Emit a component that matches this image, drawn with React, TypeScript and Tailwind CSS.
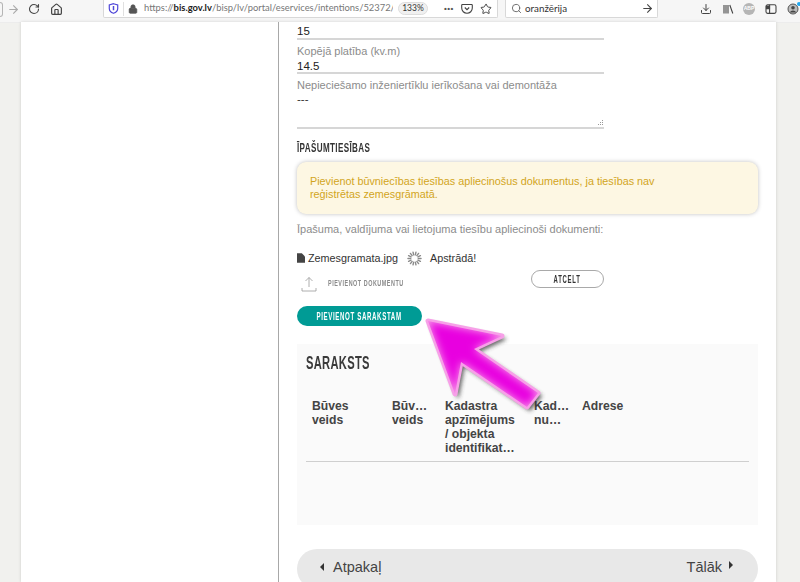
import { ArrowRight, Download, House, Lock, RotateCw, Search, Star } from "lucide-react";

const condensed = "inline-block whitespace-nowrap font-bold uppercase";

const columns = [
  { lines: ["Būves", "veids"], w: "w-[80px]" },
  { lines: ["Būv…", "veids"], w: "w-[53px]" },
  { lines: ["Kadastra", "apzīmējums", "/ objekta", "identifikat…"], w: "w-[89px]" },
  { lines: ["Kad…", "nu…"], w: "w-[48px]" },
  { lines: ["Adrese"], w: "w-[60px]" },
];

const spokes = Array.from({ length: 14 }, (_, i) => (i * Math.PI * 2) / 14);

function Toolbar() {
  return (
    <header className="h-[23px] shrink-0 border-b border-[#ececec] bg-[#f6f6f6] text-[#444]">
      <div className="flex h-[18px] items-center">
        <div className="h-[15px] w-[3px] rounded-r-full border border-l-0 border-[#b5b5b5]" />
        <ArrowRight size={13} className="ml-[4px] text-[#aaa]" />
        <RotateCw size={12} className="ml-[8px]" strokeWidth={2.2} />
        <House size={13} className="ml-[10px]" strokeWidth={2.2} />
        <div className="ml-[40px] flex h-[18px] w-[395px] items-center overflow-hidden rounded-b-[2px] border border-t-0 border-[#d8d8d8] bg-white">
          <svg viewBox="0 0 12 12" className="ml-[4px] h-[11px] w-[11px] shrink-0">
            <path d="M6 .8 10.6 2.2V6C10.6 8.6 8.4 10.4 6 11.2 3.6 10.4 1.4 8.6 1.4 6V2.2Z" fill="none" stroke="#4f46d8" strokeWidth="1.3" />
            <path d="M6 3.2V8" stroke="#4f46d8" strokeWidth="1.6" />
          </svg>
          <div className="ml-[4px] h-[14px] w-px shrink-0 bg-[#e0e0e0]" />
          <Lock size={10} className="ml-[4px] shrink-0 fill-[#555] text-[#555]" />
          <p className="ml-[6px] w-[249px] shrink-0 overflow-hidden whitespace-nowrap font-['Lato',sans-serif] text-[9.4px] text-[#777]">
            https://<b className="font-bold text-[#222]">bis.gov.lv</b>/bisp/lv/portal/eservices/intentions/52372/
          </p>
          <span className="ml-[5px] flex h-[13px] w-[30px] shrink-0 items-center justify-center rounded-full border border-[#ddd] bg-[#f0f0f0] font-['Lato',sans-serif] text-[8.5px] text-[#333]">
            133%
          </span>
          <span className="ml-[16px] shrink-0 text-[8px] font-bold leading-none tracking-[0.5px] text-[#555]">•••</span>
          <svg viewBox="0 0 12 12" className="ml-[7px] h-[12px] w-[12px] shrink-0" fill="none" stroke="#444" strokeWidth="1.1">
            <path d="M1.5 1.5h9a.8.8 0 0 1 .8.8V5a5.3 5.3 0 0 1-10.6 0V2.3a.8.8 0 0 1 .8-.8Z" />
            <path d="M3.8 4.5 6 6.7l2.2-2.2" />
          </svg>
          <Star size={12} className="ml-[7px] shrink-0" />
        </div>
        <div className="ml-[7px] flex h-[18px] w-[153px] items-center rounded-b-[2px] border border-t-0 border-[#d8d8d8] bg-white">
          <Search size={11} className="ml-[5px] text-[#666]" />
          <span className="ml-[3px] flex-1 font-['Lato',sans-serif] text-[9.8px] text-[#333]">oranžērija</span>
          <ArrowRight size={13} className="mr-[3px]" />
        </div>
        <Download size={12} className="ml-[42px]" />
        <svg viewBox="0 0 12 12" className="ml-[10px] h-[12px] w-[12px]" fill="none" stroke="#444" strokeWidth="1.1">
          <path d="M2 2v8.5M4 2v8.5M6 2v8.5M7.8 2l3 8.5" />
        </svg>
        <span className="ml-[9px] flex h-[12px] w-[12px] items-center justify-center rounded-full bg-[#b5b5b5] text-[5px] font-bold text-white">ABP</span>
        <svg viewBox="0 0 12 12" className="ml-[10px] h-[12px] w-[12px]" fill="none" stroke="#444" strokeWidth="1.1">
          <rect x="1" y="1.8" width="10" height="8.6" rx="1.6" />
          <path d="M4.6 1.8v8.6" />
          <path d="M1.5 3h3v2.6h-3Z" fill="#444" />
        </svg>
        <div className="relative ml-[10px]">
          <svg viewBox="0 0 12 12" className="h-[12px] w-[12px]">
            <circle cx="6" cy="6" r="5" fill="#bbb" stroke="#555" />
            <circle cx="6" cy="4.8" r="1.8" fill="#444" />
            <path d="M2.8 9.5a3.4 3 0 0 1 6.4 0" fill="#444" />
          </svg>
          <span className="absolute -right-[2px] -top-[1px] h-[4px] w-[4px] rounded-full bg-[#1ea7f0]" />
        </div>
      </div>
    </header>
  );
}

function Arrow() {
  const points = "428,321 502,336 474,349 538,393 527,407 461,362 455,394";
  return (
    <svg viewBox="400 300 160 130" className="absolute left-[400px] top-[300px] h-[130px] w-[160px]">
      <defs>
        <filter id="soft" x="-30%" y="-30%" width="160%" height="160%">
          <feGaussianBlur stdDeviation="4" />
        </filter>
        <filter id="shade" x="-30%" y="-30%" width="160%" height="160%">
          <feGaussianBlur stdDeviation="2.2" />
        </filter>
        <clipPath id="arrowClip">
          <polygon points={points} />
        </clipPath>
      </defs>
      <polygon points={points} transform="translate(3 3)" fill="#333" stroke="#333" strokeWidth="2" strokeLinejoin="round" filter="url(#shade)" opacity="0.75" />
      <polygon points={points} fill="#f7a0e8" stroke="#f7a0e8" strokeWidth="5" strokeLinejoin="round" />
      <g clipPath="url(#arrowClip)">
        <polygon points={points} fill="#e800e0" filter="url(#soft)" />
      </g>
    </svg>
  );
}

export default function App() {
  return (
    <div className="relative flex h-[582px] w-[800px] flex-col overflow-hidden bg-[#f1f1ee] font-['Liberation_Sans',sans-serif]">
      <Toolbar />
      <main className="-mt-px ml-[21px] flex h-[560px] w-[755px] shrink-0 bg-white shadow-[0_0_3px_rgba(0,0,0,0.15)]">
        <aside className="w-[258px] shrink-0 border-r border-[#a8a8a8]" />
        <section className="ml-[18px] w-[461px] shrink-0">
          <div className="h-[18px] w-[307px] border-b-2 border-[#d6d6d6] pt-[3px] text-[11.5px] leading-[12px] text-[#222]">15</div>

          <div className="h-[34px] w-[307px] border-b-2 border-[#d6d6d6]">
            <p className="pt-[2px] text-[11px] leading-[18px] text-[#8c8c8c]">Kopējā platība (kv.m)</p>
            <p className="text-[11.5px] leading-[12px] text-[#222]">14.5</p>
          </div>

          <div className="relative h-[55px] w-[307px] border-b-2 border-[#d6d6d6]">
            <p className="pt-[2px] text-[11px] leading-[18px] text-[#8c8c8c]">Nepieciešamo inženiertīklu ierīkošana vai demontāža</p>
            <p className="text-[11.5px] leading-[10px] text-[#333]">---</p>
            <svg viewBox="0 0 6 6" className="absolute bottom-[1px] right-[1px] h-[6px] w-[6px] fill-[#999]">
              <path d="M5 0h1v1H5ZM3 2h1v1H3ZM5 2h1v1H5ZM1 4h1v1H1ZM3 4h1v1H3ZM5 4h1v1H5Z" />
            </svg>
          </div>

          <h3 className="mt-[11px] h-[15px] text-[13px] leading-[15px] tracking-[0.6px] text-[#333]">
            <span className={`${condensed} origin-left scale-x-[0.62]`}>Īpašumtiesības</span>
          </h3>
          <div className="mt-[7px] h-[52px] rounded-[9px] bg-[#fdf7e3] pl-[13px] pt-[13px] text-[10.8px] leading-[13px] text-[#d2a51c] shadow-[0_0_4px_rgba(0,0,0,0.25)]">
            Pievienot būvniecības tiesības apliecinošus dokumentus, ja tiesības nav
            <br />
            reģistrētas zemesgrāmatā.
          </div>
          <p className="mt-[7px] text-[11px] leading-[16px] text-[#8c8c8c]">Īpašuma, valdījuma vai lietojuma tiesību apliecinoši dokumenti:</p>

          <div className="mt-[11px] flex h-[20px] items-center text-[10.8px] text-[#333]">
            <svg viewBox="0 0 10 12" className="h-[10px] w-[8px] shrink-0 fill-[#444]">
              <path d="M0 0h6l4 4v8H0Z" />
            </svg>
            <span className="ml-[3px]">Zemesgramata.jpg</span>
            <svg viewBox="0 0 16 16" className="ml-[9px] h-[15px] w-[15px]" stroke="#8a8a8a" strokeWidth="1.5" strokeLinecap="round">
              {spokes.map((a) => (
                <line key={a} x1={8 + 4 * Math.cos(a)} y1={8 + 4 * Math.sin(a)} x2={8 + 7 * Math.cos(a)} y2={8 + 7 * Math.sin(a)} />
              ))}
            </svg>
            <span className="ml-[8px]">Apstrādā!</span>
          </div>

          <div className="flex h-[26px] items-start">
            <svg viewBox="0 0 16 16" className="ml-[4px] mt-[8px] h-[16px] w-[16px] shrink-0" fill="none" stroke="#999" strokeWidth="0.8">
              <path d="M8 11V1.5M4.5 5 8 1.5 11.5 5M1 12v3h14v-3" />
            </svg>
            <span className="ml-[11px] mt-[9px] w-[203px] shrink-0 text-[9px] leading-[12px] tracking-[0.9px] text-[#8a8a8a]">
              <span className={`${condensed} origin-left scale-x-[0.6]`}>Pievienot dokumentu</span>
            </span>
            <button className="mt-[2px] flex h-[18px] w-[73px] items-center justify-center rounded-full border border-[#a9a9a9] text-[11px] tracking-[1.4px] text-[#333]">
              <span className={`${condensed} scale-x-[0.54]`}>Atcelt</span>
            </button>
          </div>

          <button className="mt-[12px] flex h-[20px] w-[125px] items-center justify-center rounded-full bg-[#009b95] text-[11px] tracking-[1.1px] text-white">
            <span className={`${condensed} scale-x-[0.56]`}>Pievienot sarakstam</span>
          </button>

          <div className="mt-[18px] h-[181px] bg-[#fafafa] px-[9px] pt-[9px]">
            <h2 className="text-[18px] leading-[20px] tracking-[0.5px] text-[#3a3a3a]">
              <span className={`${condensed} origin-left scale-x-[0.62]`}>Saraksts</span>
            </h2>
            <div className="mt-[26px] flex h-[63px] items-start border-b border-[#cfcfcf] pl-[6px] text-[12.2px] font-bold leading-[14px] text-[#444]">
              {columns.map((c) => (
                <div key={c.lines[0]} className={`${c.w} shrink-0`}>
                  {c.lines.map((l) => (
                    <div key={l}>{l}</div>
                  ))}
                </div>
              ))}
            </div>
          </div>

          <nav className="mt-[24px] flex h-[40px] items-start justify-between rounded-[20px] bg-[#e8e8e8] pl-[23px] pr-[25px] pt-[9px] text-[14.5px] leading-[18px] text-[#444]">
            <span className="flex items-center">
              <svg viewBox="0 0 4 8" className="mr-[9px] h-[8px] w-[4px] fill-[#333]"><path d="M4 0v8L0 4Z" /></svg>
              Atpakaļ
            </span>
            <span className="flex items-center">
              Tālāk
              <svg viewBox="0 0 4 8" className="ml-[7px] h-[8px] w-[4px] -translate-y-[2px] fill-[#333]"><path d="M0 0v8l4-4Z" /></svg>
            </span>
          </nav>
        </section>
      </main>
      <Arrow />
    </div>
  );
}
